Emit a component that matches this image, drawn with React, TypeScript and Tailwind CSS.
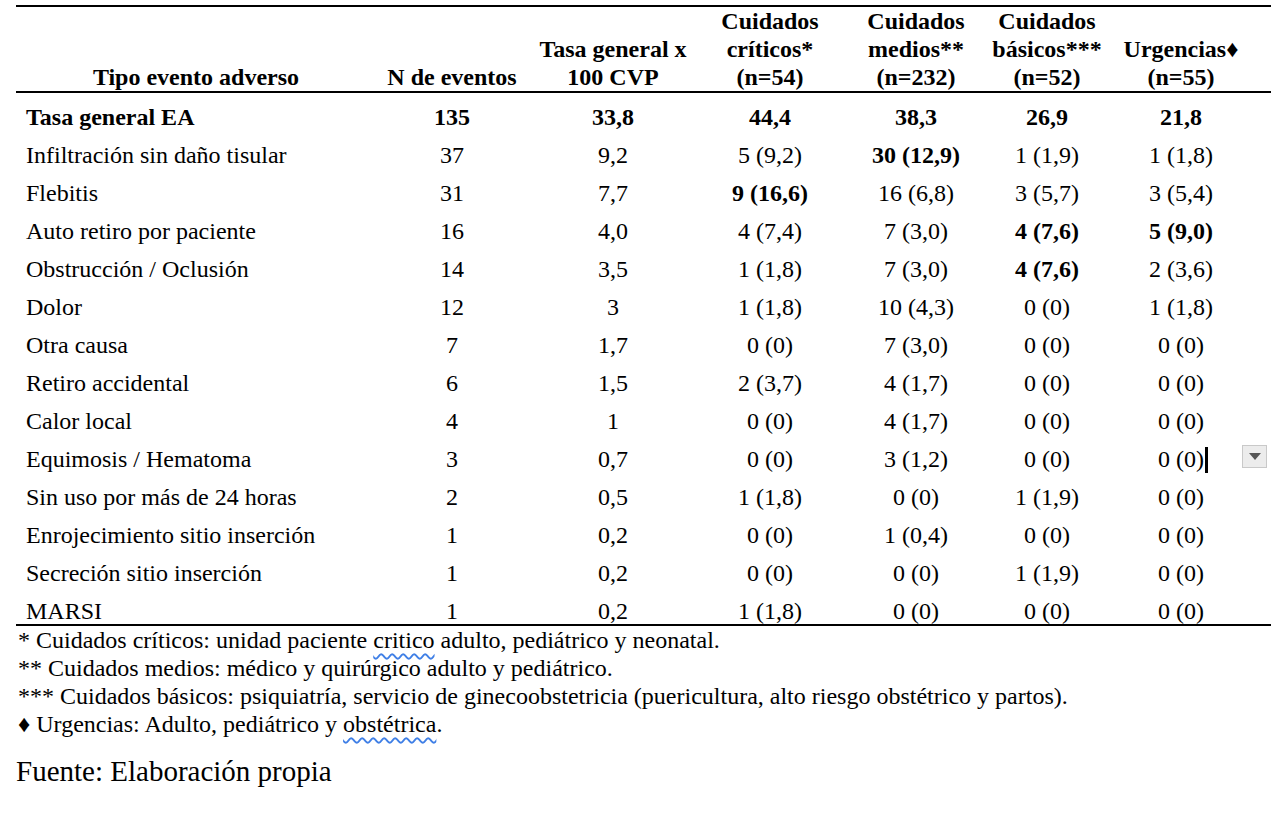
import React from "react";

type Cell = string | { v: string; b: true };

type Row = {
  label: string;
  cells: Cell[];
  bold?: boolean;
};

const rows: Row[] = [
  { label: "Tasa general EA", bold: true, cells: ["135", "33,8", "44,4", "38,3", "26,9", "21,8"] },
  { label: "Infiltración sin daño tisular", cells: ["37", "9,2", "5 (9,2)", { v: "30 (12,9)", b: true }, "1 (1,9)", "1 (1,8)"] },
  { label: "Flebitis", cells: ["31", "7,7", { v: "9 (16,6)", b: true }, "16 (6,8)", "3 (5,7)", "3 (5,4)"] },
  { label: "Auto retiro por paciente", cells: ["16", "4,0", "4 (7,4)", "7 (3,0)", { v: "4 (7,6)", b: true }, { v: "5 (9,0)", b: true }] },
  { label: "Obstrucción / Oclusión", cells: ["14", "3,5", "1 (1,8)", "7 (3,0)", { v: "4 (7,6)", b: true }, "2 (3,6)"] },
  { label: "Dolor", cells: ["12", "3", "1 (1,8)", "10 (4,3)", "0 (0)", "1 (1,8)"] },
  { label: "Otra causa", cells: ["7", "1,7", "0 (0)", "7 (3,0)", "0 (0)", "0 (0)"] },
  { label: "Retiro accidental", cells: ["6", "1,5", "2 (3,7)", "4 (1,7)", "0 (0)", "0 (0)"] },
  { label: "Calor local", cells: ["4", "1", "0 (0)", "4 (1,7)", "0 (0)", "0 (0)"] },
  { label: "Equimosis / Hematoma", cells: ["3", "0,7", "0 (0)", "3 (1,2)", "0 (0)", "0 (0)"] },
  { label: "Sin uso por más de 24 horas", cells: ["2", "0,5", "1 (1,8)", "0 (0)", "1 (1,9)", "0 (0)"] },
  { label: "Enrojecimiento sitio inserción", cells: ["1", "0,2", "0 (0)", "1 (0,4)", "0 (0)", "0 (0)"] },
  { label: "Secreción sitio inserción", cells: ["1", "0,2", "0 (0)", "0 (0)", "1 (1,9)", "0 (0)"] },
  { label: "MARSI", cells: ["1", "0,2", "1 (1,8)", "0 (0)", "0 (0)", "0 (0)"] },
];

// spell-check style wavy underline
const Squiggle = ({ children }: { children: React.ReactNode }) => (
  <span className="underline decoration-wavy decoration-[#3f7fe6] decoration-[1.5px] underline-offset-[5px]">{children}</span>
);

export default function App() {
  return (
    <div className="relative w-[1284px] h-[816px] bg-white text-black font-['Liberation_Serif','Times_New_Roman',serif] text-[24px]">
      {/* tail of the caption above, cut by the window */}
      <div className="h-[5px] overflow-hidden pl-[18px]">
        <p className="-mt-[24px] leading-[28px] text-[#9a9a9a]">eventos adversos.</p>
      </div>

      <div className="pl-[16px]">
        <table className="w-[1255px] table-fixed border-collapse border-t-2 border-black">
          <colgroup>
            <col className="w-[360px]" />
            <col className="w-[152px]" />
            <col className="w-[170px]" />
            <col className="w-[144px]" />
            <col className="w-[148px]" />
            <col className="w-[114px]" />
            <col className="w-[167px]" />
          </colgroup>
          <thead>
            <tr className="border-b-2 border-black align-bottom font-bold leading-[28px]">
              <th className="px-[10px] pt-[2px] text-center">Tipo evento adverso</th>
              <th className="text-center">N de eventos</th>
              <th className="text-center">
                Tasa general x<br />100 CVP
              </th>
              <th className="text-center">
                Cuidados<br />críticos*<br />(n=54)
              </th>
              <th className="text-center">
                Cuidados<br />medios**<br />(n=232)
              </th>
              <th className="text-center">
                Cuidados<br />básicos***<br />(n=52)
              </th>
              <th className="pr-[13px] text-center">
                Urgencias♦<br />(n=55)
              </th>
            </tr>
          </thead>
          <tbody>
            {rows.map((row, i) => {
              const last = i === rows.length - 1;
              const pad = i === 0 ? "pt-[11px]" : "pt-[12px]";
              return (
                <tr key={row.label} className={last ? "border-b-2 border-black" : ""}>
                  <td className={`px-[10px] leading-[26px] ${pad} ${row.bold ? "font-bold" : ""}`}>{row.label}</td>
                  {row.cells.map((c, j) => {
                    const text = typeof c === "string" ? c : c.v;
                    const bold = row.bold || typeof c !== "string";
                    return (
                      <td
                        key={j}
                        className={`text-center leading-[26px] whitespace-nowrap ${pad} ${j === 5 ? "pr-[13px]" : ""} ${bold ? "font-bold" : ""}`}
                      >
                        {text}
                        {i === 9 && j === 5 && (
                          <span className="relative inline-block w-0">
                            <span className="absolute -top-[20px] left-[1px] h-[26px] w-[3px] bg-black" />
                          </span>
                        )}
                      </td>
                    );
                  })}
                </tr>
              );
            })}
          </tbody>
        </table>

        <div className="pl-[2px] text-[24px] leading-[28px]">
          <p>
            * Cuidados críticos: unidad paciente <Squiggle>critico</Squiggle> adulto, pediátrico y neonatal.
          </p>
          <p>** Cuidados medios: médico y quirúrgico adulto y pediátrico.</p>
          <p>*** Cuidados básicos: psiquiatría, servicio de ginecoobstetricia (puericultura, alto riesgo obstétrico y partos).</p>
          <p>
            ♦ Urgencias: Adulto, pediátrico y <Squiggle>obstétrica</Squiggle>.
          </p>
        </div>

        <p className="mt-[15px] text-[29px] leading-[36px]">Fuente: Elaboración propia</p>
      </div>

      {/* paste-options dropdown */}
      <div className="absolute left-[1242px] top-[445px] flex h-[23px] w-[25px] items-center justify-center border border-[#c9c9c9] bg-[#ececec]">
        <svg width="12" height="7" viewBox="0 0 12 7">
          <path d="M0 0 H12 L6 7 Z" fill="#555" />
        </svg>
      </div>
    </div>
  );
}
